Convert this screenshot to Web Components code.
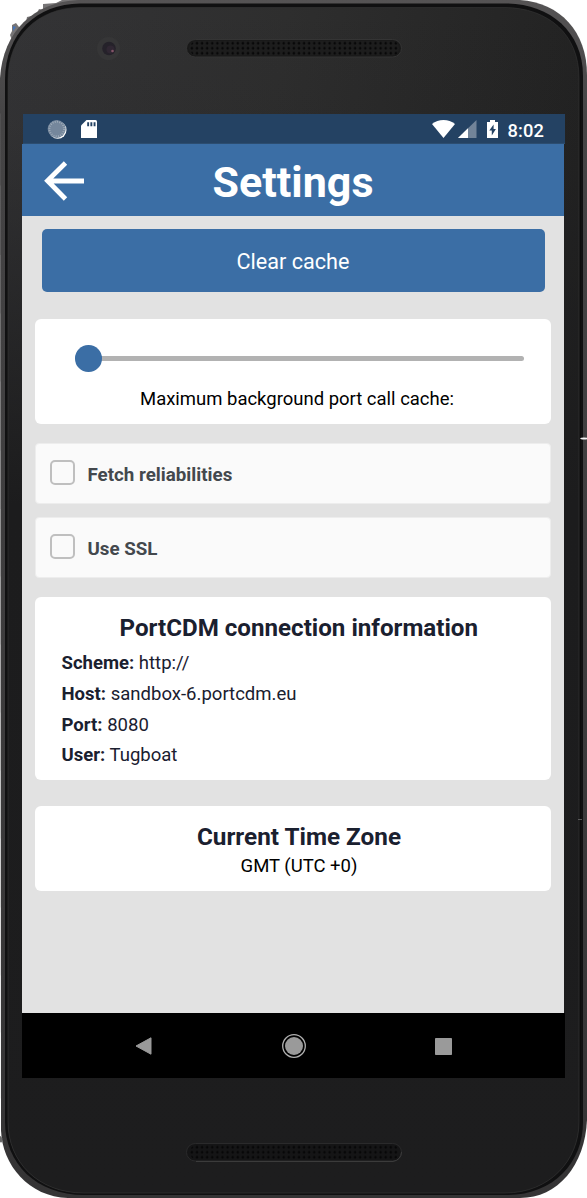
<!DOCTYPE html>
<html lang="en">
<head>
<meta charset="utf-8">
<title>Settings</title>
<style>
  html, body { margin: 0; background: #fff; }
  body { width: 587px; height: 1198px; overflow: hidden; font-family: Roboto, "Liberation Sans", sans-serif; }
</style>
</head>
<body>
<phone-frame>
  <status-bar time="8:02"></status-bar>
  <title-bar>Settings</title-bar>
  <settings-page>
    <action-button>Clear cache</action-button>
    <slider-card>Maximum background port call cache:</slider-card>
    <check-row>Fetch reliabilities</check-row>
    <check-row style="margin-top:13px">Use SSL</check-row>
    <info-card>
      <span slot="title">PortCDM connection information</span>
      <info-line label="Scheme:">http://</info-line>
      <info-line label="Host:">sandbox-6.portcdm.eu</info-line>
      <info-line label="Port:">8080</info-line>
      <info-line label="User:">Tugboat</info-line>
    </info-card>
    <zone-card>
      <span slot="title">Current Time Zone</span>GMT (UTC +0)
    </zone-card>
  </settings-page>
  <nav-bar></nav-bar>
</phone-frame>
<script>
const define = (name, html) => customElements.define(name, class extends HTMLElement {
  constructor() {
    super();
    const t = document.createElement('template');
    t.innerHTML = html;
    this.attachShadow({ mode: 'open' }).append(t.content.cloneNode(true));
  }
  connectedCallback() {
    this.shadowRoot.querySelectorAll('[data-attr]').forEach(n => {
      n.textContent = this.getAttribute(n.dataset.attr);
    });
  }
});

define('phone-frame', `
<style>
  :host { display: grid; width: 587px; height: 1198px; }
  svg, .screen { grid-area: 1 / 1; }
  .screen { display: flex; flex-direction: column; box-sizing: border-box; padding: 114px 23px 120px 22px; z-index: 1; }
</style>
<svg width="587" height="1198" viewBox="0 0 587 1198">
  <defs>
    <linearGradient id="body" x1="0" y1="0" x2="1" y2="0.3">
      <stop offset="0" stop-color="#343436"/><stop offset=".45" stop-color="#2e2e2e"/><stop offset="1" stop-color="#212121"/>
    </linearGradient>
    <linearGradient id="shade" x1="0" y1="0" x2="0" y2="1">
      <stop offset="0" stop-color="#1d1d1e" stop-opacity="0"/><stop offset=".1" stop-color="#1d1d1e" stop-opacity=".1"/><stop offset=".42" stop-color="#1c1c1d" stop-opacity="1"/><stop offset="1" stop-color="#1d1d1e"/>
    </linearGradient>
    <linearGradient id="rim" x1="0" y1="0" x2="0" y2="1">
      <stop offset="0" stop-color="#555354"/><stop offset=".1" stop-color="#454445"/><stop offset="1" stop-color="#353435"/>
    </linearGradient>
    <pattern id="dots" x="194.500" y="0" width="5.1" height="5" patternUnits="userSpaceOnUse">
      <circle cx="2.500" cy="2.500" r="1.2" fill="#050506"/>
    </pattern>
  </defs>
  <path d="M10 35L12 31V25L16 23L19 27H25L27 17L36 15L39 9L43 10V4L56 3L62 0H80L20 62Z" fill="#777576"/>
  <path d="M13 26l3 1-3 4z" fill="#4474b9"/>
  <path d="M78 0H520C560 3 587 31 587 75V1120C585 1165 558 1198 520 1198H68C29 1197 2 1165 1 1130L0 78C3 31 34 2 78 0Z" fill="url(#rim)"/>
  <path d="M80 3.500H507C549 4 583 31 583 76V1122C583 1163 553 1195 507 1195H84C36 1195 5 1163 5 1122V80C5 33 37 4 80 3.500Z" fill="#101011"/>
  <path d="M80 7.500H505C548 8 579 34 579 78V1122C579 1160 550 1193 505 1193H84C38 1193 8 1162 8 1122V80C8 36 38 8 80 7.500Z" fill="url(#body)"/>
  <path d="M80 7.500H505C548 8 579 34 579 78V1122C579 1160 550 1193 505 1193H84C38 1193 8 1162 8 1122V80C8 36 38 8 80 7.500Z" fill="url(#shade)" stroke="#353536" stroke-width=".6"/>
  <path d="M580.500 90V1110" stroke="#0c0c0c"/>
  <ellipse cx="584" cy="438.500" rx="3.700" ry="1.100" fill="#f2f2f2"/>
  <path d="M0 1136l2 2v4h-2M578 819.500h4" fill="#666" stroke="#777" stroke-width=".7"/>
  <circle cx="108.500" cy="48.500" r="11.500" fill="#363637"/>
  <circle cx="109" cy="48.500" r="6.800" fill="#25222a"/>
  <circle cx="110.500" cy="49.500" r="4" fill="#302733"/>
  <circle cx="112.500" cy="51" r="1.300" fill="#855568"/>
  <rect x="186.500" y="39.500" width="215" height="17.500" rx="8.700" fill="#191919" stroke="#343434"/>
  <rect x="189" y="41" width="210" height="14.500" rx="7" fill="#1d1d1d"/>
  <g transform="translate(0 40.700)"><rect x="190" y="0" width="209" height="15" rx="7" fill="url(#dots)"/></g>
  <rect x="186.500" y="1143.500" width="215" height="17.500" rx="8.700" fill="#151516" stroke="#2a2a2b"/>
  <path d="M196 1161.500H393Q401 1160 401.500 1152" fill="none" stroke="#414141" stroke-width=".8"/>
  <g transform="translate(0 1144.700)"><rect x="190" y="0" width="209" height="15" rx="7" fill="url(#dots)"/></g>
</svg>
<div class="screen"><slot></slot></div>`);

define('status-bar', `
<style>
  :host { display: flex; box-sizing: border-box; height: 30px; margin: 0 -1px 0 1px; padding: 0 21px 0 24px; background: #244263; border-bottom: 1px solid #2c4d70; color: #fff; align-items: center; }
  svg { display: block; }
  .t { font-size: 18.300px; line-height: 30px; font-weight: 500; margin-top: 4px; margin-left: 10px; letter-spacing: .1px; }
  .gap { flex: 1; }
</style>
<svg width="20" height="20" viewBox="0 0 20 20"><circle cx="10.800" cy="11" r="8.700" fill="#fff"/><circle cx="9.700" cy="10" r="9" fill="#75879c"/><circle cx="9.700" cy="10" r="7.300" fill="none" stroke="#a0adba" stroke-width="2" stroke-dasharray=".9 1.400"/></svg>
<svg style="margin-left:14px" width="16" height="18" viewBox="0 0 16 18"><path d="M5.500 0H14.500Q16 0 16 1.500V18H0V5.500Z" fill="#fff"/><path d="M6.200 2.200h1.900v4H6.200zM9.400 2.200h1.900v4H9.400zM12.600 2.200h1.900v4h-1.900z" fill="#244263"/></svg>
<span class="gap"></span>
<svg width="23" height="18" viewBox="0 0 23 18"><path d="M11.500 18L0 4Q5 0 11.500 0T23 4Z" fill="#fff"/></svg>
<svg style="margin-left:3px" width="19" height="18" viewBox="0 0 19 18"><path d="M0 18L18.500 0V18Z" fill="#728499"/><path d="M0 18L10 8.300V18Z" fill="#fff"/></svg>
<svg style="margin-left:10px" width="11" height="18" viewBox="0 0 11 18"><path d="M0 2H3V0H8V2H11V18H0Z" fill="#fff"/><path d="M6.600 4.500L2.300 10.400H4.800V15.500L8.900 8.900H6.600Z" fill="#244263"/></svg>
<span class="t" data-attr="time"></span>`);

define('title-bar', `
<style>
  :host { display: grid; height: 72px; background: #3b6ea5; color: #fff; align-items: center; }
  svg, h1 { grid-area: 1 / 1; }
  svg { margin-left: 22px; margin-top: 2px; }
  h1 { margin: 4px 0 0; text-align: center; font-size: 43px; line-height: 50px; font-weight: 700; }
</style>
<svg width="42" height="42" viewBox="0 0 42 42"><path d="M40 21H4.500M21.500 3L3.500 20.800L21.500 39" fill="none" stroke="#fff" stroke-width="4.800"/></svg>
<h1><slot></slot></h1>`);

define('settings-page', `
<style>
  :host { display: flex; flex-direction: column; box-sizing: border-box; height: 797px; padding: 13px 13px 0; background: #e2e2e2; }
</style><slot></slot>`);

define('action-button', `
<style>
  :host { display: block; margin: 0 6.500px; height: 63px; border-radius: 5px; background: #3b6ea5; color: #fff; text-align: center; font-size: 21.600px; line-height: 66px; }
</style><slot></slot>`);

define('slider-card', `
<style>
  :host { display: flex; flex-direction: column; box-sizing: border-box; margin-top: 27px; height: 105px; padding: 26px 27px 0 40px; border-radius: 6px; background: #fff; color: #000; }
  .s { display: flex; align-items: center; height: 27px; }
  i { width: 26.500px; height: 26.500px; border-radius: 50%; background: #3b6ea5; z-index: 1; }
  b { flex: 1; height: 5px; margin-left: -2px; border-radius: 0 3px 3px 0; background: #b2b2b2; }
  .l { margin: 15px -7px 0 -12px; text-align: center; font-size: 18.480px; line-height: 24px; white-space: nowrap; }
</style>
<div class="s"><i></i><b></b></div><div class="l"><slot></slot></div>`);

define('check-row', `
<style>
  :host { display: flex; box-sizing: border-box; align-items: center; gap: 13px; margin-top: 19px; height: 61px; padding: 0 0 0 13.500px; border: 1.500px solid #ededed; border-radius: 4px; background: #fafafa; color: #43484d; font-size: 18.750px; font-weight: 700; }
  i { box-sizing: border-box; width: 25px; height: 25px; margin-top: -2px; border: 2.200px solid #bfbfbf; border-radius: 5px; }
  span { margin-top: 2px; }
</style><i></i><span><slot></slot></span>`);

define('info-card', `
<style>
  :host { display: block; box-sizing: border-box; margin-top: 19px; height: 183px; padding: 17px 0 0 26.500px; border-radius: 6px; background: #fff; color: #1a202f; }
  .h { margin-left: -15px; text-align: center; font-size: 24.150px; line-height: 28px; font-weight: 700; margin-bottom: 6px; }
</style><div class="h"><slot name="title"></slot></div><slot></slot>`);

define('info-line', `
<style>
  :host { display: block; font-size: 18.550px; line-height: 30.800px; white-space: nowrap; }
</style><b data-attr="label"></b> <slot></slot>`);

define('zone-card', `
<style>
  :host { display: block; box-sizing: border-box; margin-top: 26px; height: 85px; padding-top: 17px; border-radius: 6px; background: #fff; color: #000; text-align: center; font-size: 18.500px; line-height: 30px; padding-left: 12px; }
  .h { font-size: 24.300px; line-height: 28px; font-weight: 700; color: #1a202f; }
</style><div class="h"><slot name="title"></slot></div><slot></slot>`);

define('nav-bar', `
<style>
  :host { display: flex; justify-content: space-between; align-items: center; box-sizing: border-box; height: 65px; margin-right: -1px; padding: 1px 113px 0 113px; background: #000; }
</style>
<svg width="17" height="18" viewBox="0 0 17 18"><path d="M1 9L16 .800V17.200Z" fill="#9a9a9a" stroke="#9a9a9a" stroke-linejoin="round"/></svg>
<svg width="24" height="24" viewBox="0 0 24 24"><circle cx="12" cy="12" r="11.300" fill="none" stroke="#b0b0b0" stroke-width="1.300"/><circle cx="12" cy="12" r="9" fill="#9a9a9a"/></svg>
<svg width="17" height="17" viewBox="0 0 17 17"><rect width="17" height="17" rx=".8" fill="#9a9a9a"/></svg>`);
</script>
</body>
</html>
